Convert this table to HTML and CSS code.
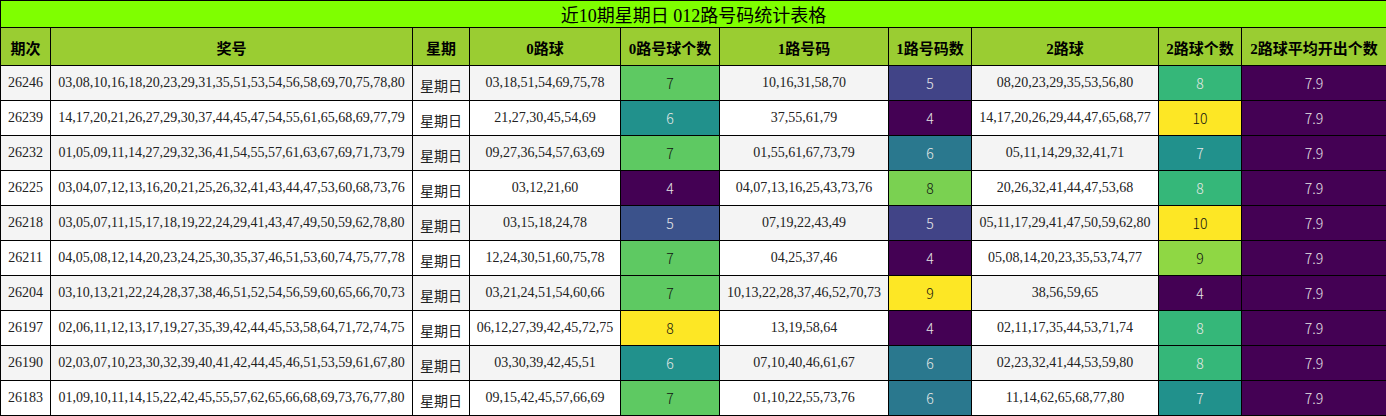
FILE: index.html
```html
<!DOCTYPE html>
<html lang="zh">
<head>
<meta charset="utf-8">
<title>近10期星期日 012路号码统计表格</title>
<link rel="stylesheet" href="styles.css">
</head>
<body>
<table class="stats">
  <colgroup>
    <col class="c-issue">
    <col class="c-nums">
    <col class="c-week">
    <col class="c-r0">
    <col class="c-n0">
    <col class="c-r1">
    <col class="c-n1">
    <col class="c-r2">
    <col class="c-n2">
    <col class="c-avg">
  </colgroup>
  <thead>
    <tr class="title-row"><th colspan="10">近10期星期日 012路号码统计表格</th></tr>
    <tr class="head-row">
      <th>期次</th><th>奖号</th><th>星期</th><th>0路球</th><th>0路号球个数</th><th>1路号码</th><th>1路号码数</th><th>2路球</th><th>2路球个数</th><th>2路球平均开出个数</th>
    </tr>
  </thead>
  <tbody>
    <tr>
      <td>26246</td><td>03,08,10,16,18,20,23,29,31,35,51,53,54,56,58,69,70,75,78,80</td><td class="cjk">星期日</td>
      <td>03,18,51,54,69,75,78</td><td class="v v7a">7</td>
      <td>10,16,31,58,70</td><td class="v v5b">5</td>
      <td>08,20,23,29,35,53,56,80</td><td class="v v8c">8</td><td class="v v0">7.9</td>
    </tr>
    <tr>
      <td>26239</td><td>14,17,20,21,26,27,29,30,37,44,45,47,54,55,61,65,68,69,77,79</td><td class="cjk">星期日</td>
      <td>21,27,30,45,54,69</td><td class="v v6a">6</td>
      <td>37,55,61,79</td><td class="v v0">4</td>
      <td>14,17,20,26,29,44,47,65,68,77</td><td class="v vmax">10</td><td class="v v0">7.9</td>
    </tr>
    <tr>
      <td>26232</td><td>01,05,09,11,14,27,29,32,36,41,54,55,57,61,63,67,69,71,73,79</td><td class="cjk">星期日</td>
      <td>09,27,36,54,57,63,69</td><td class="v v7a">7</td>
      <td>01,55,61,67,73,79</td><td class="v v6b">6</td>
      <td>05,11,14,29,32,41,71</td><td class="v v7c">7</td><td class="v v0">7.9</td>
    </tr>
    <tr>
      <td>26225</td><td>03,04,07,12,13,16,20,21,25,26,32,41,43,44,47,53,60,68,73,76</td><td class="cjk">星期日</td>
      <td>03,12,21,60</td><td class="v v0">4</td>
      <td>04,07,13,16,25,43,73,76</td><td class="v v8b">8</td>
      <td>20,26,32,41,44,47,53,68</td><td class="v v8c">8</td><td class="v v0">7.9</td>
    </tr>
    <tr>
      <td>26218</td><td>03,05,07,11,15,17,18,19,22,24,29,41,43,47,49,50,59,62,78,80</td><td class="cjk">星期日</td>
      <td>03,15,18,24,78</td><td class="v v5a">5</td>
      <td>07,19,22,43,49</td><td class="v v5b">5</td>
      <td>05,11,17,29,41,47,50,59,62,80</td><td class="v vmax">10</td><td class="v v0">7.9</td>
    </tr>
    <tr>
      <td>26211</td><td>04,05,08,12,14,20,23,24,25,30,35,37,46,51,53,60,74,75,77,78</td><td class="cjk">星期日</td>
      <td>12,24,30,51,60,75,78</td><td class="v v7a">7</td>
      <td>04,25,37,46</td><td class="v v0">4</td>
      <td>05,08,14,20,23,35,53,74,77</td><td class="v v9c">9</td><td class="v v0">7.9</td>
    </tr>
    <tr>
      <td>26204</td><td>03,10,13,21,22,24,28,37,38,46,51,52,54,56,59,60,65,66,70,73</td><td class="cjk">星期日</td>
      <td>03,21,24,51,54,60,66</td><td class="v v7a">7</td>
      <td>10,13,22,28,37,46,52,70,73</td><td class="v vmax">9</td>
      <td>38,56,59,65</td><td class="v v0">4</td><td class="v v0">7.9</td>
    </tr>
    <tr>
      <td>26197</td><td>02,06,11,12,13,17,19,27,35,39,42,44,45,53,58,64,71,72,74,75</td><td class="cjk">星期日</td>
      <td>06,12,27,39,42,45,72,75</td><td class="v vmax">8</td>
      <td>13,19,58,64</td><td class="v v0">4</td>
      <td>02,11,17,35,44,53,71,74</td><td class="v v8c">8</td><td class="v v0">7.9</td>
    </tr>
    <tr>
      <td>26190</td><td>02,03,07,10,23,30,32,39,40,41,42,44,45,46,51,53,59,61,67,80</td><td class="cjk">星期日</td>
      <td>03,30,39,42,45,51</td><td class="v v6a">6</td>
      <td>07,10,40,46,61,67</td><td class="v v6b">6</td>
      <td>02,23,32,41,44,53,59,80</td><td class="v v8c">8</td><td class="v v0">7.9</td>
    </tr>
    <tr>
      <td>26183</td><td>01,09,10,11,14,15,22,42,45,55,57,62,65,66,68,69,73,76,77,80</td><td class="cjk">星期日</td>
      <td>09,15,42,45,57,66,69</td><td class="v v7a">7</td>
      <td>01,10,22,55,73,76</td><td class="v v6b">6</td>
      <td>11,14,62,65,68,77,80</td><td class="v v7c">7</td><td class="v v0">7.9</td>
    </tr>
  </tbody>
</table>
</body>
</html>
```

FILE: styles.css
```css
html, body {
  margin: 0;
  padding: 0;
  background: #ffffff;
}

.stats {
  width: 1386px;
  table-layout: fixed;
  border-collapse: collapse;
  font-family: "Liberation Serif", "Noto Sans CJK SC", serif;
  font-size: 14px;
  color: #222;
}

.c-issue { width: 50px; }
.c-nums { width: 362px; }
.c-week { width: 57px; }
.c-r0 { width: 151px; }
.c-n0 { width: 99px; }
.c-r1 { width: 169px; }
.c-n1 { width: 83px; }
.c-r2 { width: 187px; }
.c-n2 { width: 83px; }
.c-avg { width: 145px; }

.stats th,
.stats td {
  border: 1px solid #000;
  padding: 0;
  text-align: center;
  vertical-align: middle;
  white-space: nowrap;
  overflow: hidden;
}

.title-row th {
  height: 26px;
  background: #7fff00;
  font-size: 18px;
  font-weight: normal;
  color: #000;
}

.head-row th {
  height: 36px;
  background: #9acd32;
  font-size: 15px;
  font-weight: bold;
  color: #000;
  padding-top: 1px;
}

.stats tbody tr td {
  height: 34px;
}

.stats tbody tr:nth-child(odd) td {
  background: #f4f4f4;
}

.stats tbody tr:nth-child(even) td {
  background: #ffffff;
}

.stats td.cjk {
  font-family: "Noto Sans CJK SC", sans-serif;
  font-size: 14px;
  padding-top: 3px;
  height: 31px;
}

.stats td.v {
  font-family: "Noto Sans CJK SC", sans-serif;
  font-size: 14px;
  font-weight: 300;
  color: #111;
}

.stats tbody tr td.v0 { background: #440154; color: #e8e8e8; }
.stats tbody tr td.v5a { background: #3b528b; color: #e8e8e8; }
.stats tbody tr td.v6a { background: #21918c; color: #e8e8e8; }
.stats tbody tr td.v7a { background: #5ec962; color: #111; }
.stats tbody tr td.vmax { background: #fde725; color: #111; }
.stats tbody tr td.v5b { background: #414487; color: #e8e8e8; }
.stats tbody tr td.v6b { background: #2a788e; color: #e8e8e8; }
.stats tbody tr td.v8b { background: #7ad151; color: #111; }
.stats tbody tr td.v7c { background: #21918c; color: #e8e8e8; }
.stats tbody tr td.v8c { background: #35b779; color: #e8e8e8; }
.stats tbody tr td.v9c { background: #8fd744; color: #111; }
```
